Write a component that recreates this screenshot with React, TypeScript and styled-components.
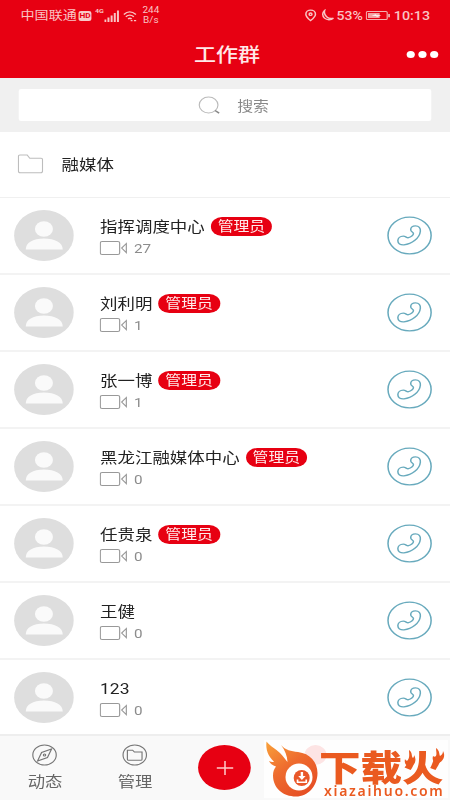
import React from 'react';
import styled, { createGlobalStyle } from 'styled-components';

const RED = '#e70012';

const Global = createGlobalStyle`
  * { box-sizing: border-box; }
  body { margin: 0; background: #fff; overflow: hidden; }
`;

const Screen = styled.main`
  position: relative;
  width: 450px;
  height: 800px;
  overflow: hidden;
  background: #fff;
`;

/* The phone layout is 384 units wide and fills the wider screen. */
const Phone = styled.div`
  width: 384px;
  height: 800px;
  transform: scaleX(1.171875);
  transform-origin: 0 0;
  display: flex;
  flex-direction: column;
  font-family: Roboto, 'Noto Sans CJK SC', sans-serif;
  color: #222;
`;

const Header = styled.header`
  height: 78px;
  flex: none;
  background: ${RED};
  color: #ffe9e9;
`;

const StatusBar = styled.div`
  height: 31px;
  padding: 0 17px 0 17.5px;
  display: flex;
  align-items: center;
  justify-content: space-between;
  font-size: 12px;
  line-height: 14px;
  color: #f9c4c4;
`;

const StatusGroup = styled.div`
  display: flex;
  align-items: center;
  white-space: nowrap;
`;

const HdMark = styled.span`
  width: 11px;
  height: 10px;
  margin-left: 1.5px;
  border-radius: 2px;
  background: #f9c9c9;
  color: ${RED};
  font-size: 7px;
  font-weight: 700;
  line-height: 10px;
  text-align: center;
`;

const Network = styled.span`
  margin: -9px 0 0 3px;
  font-size: 6px;
  line-height: 6px;
  font-weight: 700;
`;

const WifiSlot = styled.span`
  display: flex;
  margin-left: 3px;
`;

const Speed = styled.span`
  margin-left: 5px;
  font-size: 8.5px;
  line-height: 9.5px;
  text-align: center;
`;

const Clock = styled.span`
  margin-left: 3.5px;
  font-size: 12.2px;
  font-weight: 500;
`;

const Percent = styled.span`
  margin: 0 2px 0 1.5px;
  font-size: 12px;
  font-weight: 500;
`;

const TitleBar = styled.div`
  height: 47px;
  display: grid;
  grid-template-columns: 1fr auto 1fr;
  align-items: center;
  padding: 0 10.5px 0 14px;
`;

const Title = styled.h1`
  grid-column: 2;
  margin: 2px 0 0;
  font-size: 18.8px;
  font-weight: 500;
  line-height: 26px;
`;

const More = styled.div`
  justify-self: end;
  display: flex;
  gap: 2.6px;
`;

const Dot = styled.i`
  width: 7px;
  height: 7px;
  border-radius: 50%;
  background: #fff;
`;

const SearchArea = styled.div`
  height: 54px;
  flex: none;
  padding: 11px 16px 0 16px;
  background: #f0f0f0;
`;

const SearchField = styled.div`
  height: 32px;
  display: flex;
  align-items: center;
  justify-content: center;
  gap: 15px;
  padding-left: 14px;
  border-radius: 2px;
  background: #fff;
  color: #888;
  font-size: 13.5px;
`;

const FolderRow = styled.div`
  height: 66px;
  flex: none;
  display: flex;
  align-items: center;
  gap: 15.5px;
  padding: 0 0 2px 15px;
  border-bottom: 1.5px solid #f0f0f0;
  font-size: 14.9px;
`;

const Contact = styled.div`
  height: 77px;
  flex: none;
  display: flex;
  align-items: center;
  padding: 0 15.5px 0 12px;
  border-bottom: 2px solid #f3f3f3;

  &:nth-last-child(2) {
    border-bottom-color: transparent;
  }
`;

const Info = styled.div`
  flex: 1;
  margin-left: 22.4px;
  padding-top: 1px;
`;

const NameLine = styled.div`
  height: 20px;
  display: flex;
  align-items: center;
  gap: 5px;
  font-size: 14.9px;
  line-height: 20px;
`;

const Badge = styled.span`
  width: 52.5px;
  height: 19px;
  border-radius: 10px;
  background: ${RED};
  color: #ffecec;
  font-size: 13.5px;
  line-height: 18px;
  text-align: center;
`;

const CountLine = styled.div`
  height: 15px;
  margin-top: 4px;
  display: flex;
  align-items: center;
  gap: 4px;
  color: #8c8c8c;
  font-size: 13px;
`;

const Nav = styled.nav`
  height: 66px;
  flex: none;
  margin-top: -3px;
  display: grid;
  grid-template-columns: repeat(5, 1fr);
  background: #f9f9f9;
  border-top: 2px solid #eee;
`;

const Tab = styled.div`
  display: flex;
  flex-direction: column;
  align-items: center;
  padding-top: 8px;
  gap: 5px;
  color: #666;
  font-size: 14.8px;
  line-height: 22px;
`;

const AddButton = styled.div`
  width: 45px;
  height: 45px;
  align-self: start;
  justify-self: center;
  margin-top: 9px;
  border-radius: 50%;
  background: ${RED};
  display: grid;
  place-items: center;
`;

const Watermark = styled.div`
  position: absolute;
  left: 264px;
  top: 740px;
  width: 184px;
  height: 58px;
  display: flex;
  background: rgba(255, 255, 255, 0.85);
  color: #ea5a20;
`;

const WatermarkText = styled.div`
  display: flex;
  flex-direction: column;
`;

const BrandLine = styled.div`
  position: relative;
  height: 45px;
`;

const Brand = styled.div`
  height: 36px;
  margin-top: 8px;
  font: 900 41.5px/36px 'Noto Sans CJK SC', sans-serif;
  white-space: nowrap;
  transform: scaleY(0.86);
`;

const Sparks = styled.svg`
  position: absolute;
  left: 84px;
  top: 7px;
`;

const Domain = styled.div`
  height: 12px;
  padding-left: 5px;
  font: 600 14px/12px 'Noto Sans', sans-serif;
  letter-spacing: 1.7px;
`;

const Avatar = () => (
  <svg width="51" height="51" viewBox="0 0 51 51">
    <circle cx="25.5" cy="25.5" r="25.5" fill="#dedede" />
    <circle cx="25.5" cy="19" r="7.700" fill="#fafafa" />
    <path d="M10 39.500c0-7 6-11 15.500-11s16 4 16 11z" fill="#fafafa" />
  </svg>
);

const Camera = () => (
  <svg width="25" height="15" viewBox="0 0 25 15" fill="none" stroke="#999" strokeWidth="1">
    <rect x=".6" y=".5" width="16.500" height="13" rx="1.500" />
    <path d="M22.800 2.500v9.200l-4-4.600z" />
  </svg>
);

const Call = () => (
  <svg width="39" height="39" viewBox="0 0 39 39" fill="none" stroke="#68aabd" strokeWidth="1.300">
    <circle cx="19.500" cy="19.500" r="18.400" />
    <path d="M20.500 14C20.300 11.300 22 9.800 24.500 9.800c3 0 4.500 2.200 4.200 5.400-.6 6.800-7.200 13-14 13.600-3.200.3-5.200-1.400-5.200-4 0-2.600 2-4.600 4.600-4.600 2.400 0 2.800 2 4.500 1.500 1.900-.5 4.300-2.400 4.200-4.200-.1-1.500-2.200-1.500-2.300-3.500z" />
  </svg>
);

const Folder = () => (
  <svg width="22" height="20" viewBox="0 0 22 20" fill="none" stroke="#bdbdbd">
    <path d="M.7 17V2.200Q.7 1 2 1h6.200l2.200 3.200H20q1.300 0 1.300 1.300V17q0 1.800-1.800 1.800h-17Q.7 18.800.7 17z" />
  </svg>
);

const Magnifier = () => (
  <svg width="19" height="19" viewBox="0 0 19 19" fill="none" stroke="#bbb">
    <circle cx="9" cy="9" r="8" />
    <path d="M14.500 14.500l3.500 2.600" stroke="#888" strokeWidth="1.400" />
  </svg>
);

const Signal = () => (
  <svg width="13" height="12" viewBox="0 0 13 12" fill="#f9c4c4">
    <path d="M0 9.500h1.700V12H0zM2.700 7.500h1.700V12H2.700zM5.400 5.500h1.700V12H5.400zM8.100 3h1.700v9H8.100zM10.800.5h1.700V12h-1.700z" />
  </svg>
);

const Wifi = () => (
  <svg width="12" height="12" viewBox="0 0 12 12" fill="none" stroke="#f9c4c4" strokeWidth="1.300">
    <path d="M.7 4.500Q5.500-.8 11 4.500M2.400 6.700q3.200-3.200 6.800 0M4.300 8.900q1.500-1.400 3 0" />
    <path d="M6.500 10.700h1.600M9.300 10.700h1.900" />
  </svg>
);

const StatusIcons = () => (
  <svg width="26" height="13" viewBox="0 0 26 13" fill="none" stroke="#f9c4c4" strokeWidth="1.300">
    <path d="M5 11.600C2.300 9 1 7.300 1 5.200a4.100 4.100 0 0 1 8.200 0C9.200 7.300 7.800 9 5 11.600z" />
    <circle cx="5" cy="5.200" r="1.200" />
    <path d="M17 1.500a5 5 0 1 0 7.500 7.700c-4.500 1.400-8.500-2.800-7.500-7.700z" />
  </svg>
);

const Battery = () => (
  <svg width="21" height="9" viewBox="0 0 21 9" fill="none" stroke="#f4b0b0">
    <rect x=".6" y=".6" width="17.800" height="7.800" rx="1" />
    <path d="M2 2h10v5H2z" fill="#f4a0a0" stroke="none" />
    <path d="M5 4.500l4-1.300v1h4.500L9.300 6V4.900z" fill="#fff" stroke="none" />
    <path d="M20 3v3.200" strokeWidth="1.500" />
  </svg>
);

const Compass = () => (
  <svg width="22" height="22" viewBox="0 0 22 22" fill="none" stroke="#777">
    <circle cx="11" cy="11" r="10" />
    <path d="M17 5l-3.500 8.500L5 17l3.500-8.500z" />
    <circle cx="11" cy="11" r="1" />
  </svg>
);

const Manage = () => (
  <svg width="22" height="22" viewBox="0 0 22 22" fill="none" stroke="#777">
    <circle cx="11" cy="11" r="10" />
    <path d="M4.700 15.300V6.200h4.500l1.500 1.900h6.500v7.200q0 1-1 1H5.700q-1 0-1-1z" />
  </svg>
);

const Flame = () => (
  <svg width="55" height="58" viewBox="264 740 55 58" overflow="visible">
    <defs>
      <linearGradient id="flame" x1="0" y1="0" x2=".7" y2="1">
        <stop offset="0" stopColor="#f9a13a" />
        <stop offset=".5" stopColor="#ee6b2e" />
        <stop offset="1" stopColor="#e64f24" />
      </linearGradient>
    </defs>
    <ellipse cx="315.500" cy="755" rx="11" ry="10" fill="#fde4e4" />
    <path d="M266.500 741.500c4 5 9 7 13.500 11.500 3 3 5 6 7.500 9-.2-6-2.500-12-6.500-17 4.500 5.500 10 6 17 7 12 1.500 19.500 10 19.500 21 0 13-9.500 23.500-21.500 23.500-13 0-23-8.500-23-21 0-4 1-6.500 3-9-3.500-1-6-3-7-5.500 2 1 3.500 1.200 5 .8-6-6-8.500-12-7.500-20.300z" fill="url(#flame)" />
    <circle cx="299" cy="777" r="13.500" fill="#fff" />
    <circle cx="301.700" cy="778" r="8" fill="#e9572a" />
    <path d="M300.700 772h2.400v4h2.500l-3.700 4-3.700-4h2.500zM296.700 779.500h1.700v2h7v-2h1.700v3.500h-10.400z" fill="#fff" />
  </svg>
);

const contacts = [
  { name: '指挥调度中心', count: 27, admin: true },
  { name: '刘利明', count: 1, admin: true },
  { name: '张一博', count: 1, admin: true },
  { name: '黑龙江融媒体中心', count: 0, admin: true },
  { name: '任贵泉', count: 0, admin: true },
  { name: '王健', count: 0, admin: false },
  { name: '123', count: 0, admin: false },
];

export default function App() {
  return (
    <Screen>
      <Global />
      <Phone>
        <Header>
          <StatusBar>
            <StatusGroup>
              中国联通
              <HdMark>HD</HdMark>
              <Network>4G</Network>
              <Signal />
              <WifiSlot><Wifi /></WifiSlot>
              <Speed>244<br />B/s</Speed>
            </StatusGroup>
            <StatusGroup>
              <StatusIcons />
              <Percent>53%</Percent>
              <Battery />
              <Clock>10:13</Clock>
            </StatusGroup>
          </StatusBar>
          <TitleBar>
            <Title>工作群</Title>
            <More><Dot /><Dot /><Dot /></More>
          </TitleBar>
        </Header>
        <SearchArea>
          <SearchField><Magnifier />搜索</SearchField>
        </SearchArea>
        <FolderRow><Folder />融媒体</FolderRow>
        {contacts.map((c) => (
          <Contact key={c.name}>
            <Avatar />
            <Info>
              <NameLine>{c.name}{c.admin && <Badge>管理员</Badge>}</NameLine>
              <CountLine><Camera />{c.count}</CountLine>
            </Info>
            <Call />
          </Contact>
        ))}
        <Nav>
          <Tab><Compass />动态</Tab>
          <Tab><Manage />管理</Tab>
          <AddButton>
            <svg width="16" height="18" viewBox="0 0 16 18" stroke="#ffc9c9" strokeWidth="1.300">
              <path d="M8 2v14M1 9h14" />
            </svg>
          </AddButton>
        </Nav>
      </Phone>
      <Watermark>
        <Flame />
        <WatermarkText>
          <BrandLine>
            <Brand>下载火</Brand>
            <Sparks width="44" height="22" viewBox="0 0 44 22" fill="#ea5a20">
              <path d="M6 3c4 3 2 6 4 8 1-1 1-2 1-3 3 5 1 10-3 11-5 1-7-3-6-7 1 2 2 2 3 1C7 10 6 6 6 3zM33 1c4 3 3 6 4 8 2-1 3-3 3-5 3 5 0 11-5 12-5 0-6-4-5-7 1 1 2 1 3 0 1-2 0-5 0-8z" />
            </Sparks>
          </BrandLine>
          <Domain>xiazaihuo.com</Domain>
        </WatermarkText>
      </Watermark>
    </Screen>
  );
}
